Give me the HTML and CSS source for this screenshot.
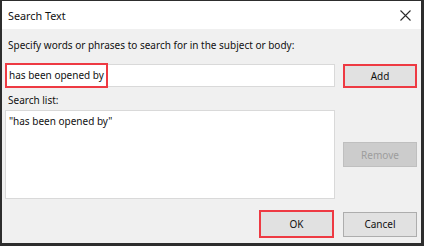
FILE: index.html
```html
<!DOCTYPE html>
<html lang="en">
<head>
    <meta charset="UTF-8">
    <title>Search Text</title>
    <link rel="stylesheet" href="styles.css">
</head>
<body>
    <div class="dialog">
        <div class="title-bar">
            <span class="title">Search Text</span>
            <svg class="close" width="11" height="11" viewBox="0 0 11 11">
                <path d="M0.5 0.5 L10.5 10.5 M10.5 0.5 L0.5 10.5" stroke="#2b2b2b" stroke-width="1.1" fill="none"/>
            </svg>
        </div>

        <div class="content">
            <div class="label">Specify words or phrases to search for in the subject or body:</div>

            <div class="row input-row">
                <div class="input-box">
                    <span class="highlight">has been opened by</span>
                </div>
                <button class="btn marked add">Add</button>
            </div>

            <div class="label list-label">Search list:</div>

            <div class="row">
                <div class="list-box">"has been opened by"</div>
                <div class="side">
                    <button class="btn disabled">Remove</button>
                </div>
            </div>

            <div class="footer">
                <button class="btn marked ok">OK</button>
                <button class="btn">Cancel</button>
            </div>
        </div>
    </div>
</body>
</html>
```

FILE: styles.css
```css
* {
    box-sizing: border-box;
}

body {
    margin: 0;
    padding: 1px 0 0 2px;
    font-family: "Noto Sans", "Open Sans", sans-serif;
    font-size: 10px;
    color: #111;
    background-color: #2d2d2d;
}

.dialog {
    width: 419px;
    height: 242px;
    background-color: #f0f0f0;
    display: flex;
    flex-direction: column;
}

.title-bar {
    height: 28px;
    flex-shrink: 0;
    background-color: #fff;
    display: flex;
    align-items: center;
    justify-content: space-between;
    padding: 0 10px 0 6px;
}

.title {
    font-size: 10.8px;
    color: #111;
}

.close {
    margin-top: 1px;
}

.content {
    padding: 8px 4px 0 3px;
    display: flex;
    flex-direction: column;
}

.label {
    height: 16px;
    line-height: 16px;
    padding-left: 3px;
}

.row {
    display: flex;
    align-items: flex-start;
    gap: 8px;
}

.input-row {
    margin-top: 10px;
}

.input-box {
    width: 330px;
    height: 23px;
    margin-top: 1px;
    background-color: #fff;
    border: 1px solid #d9d9d9;
    display: flex;
    align-items: center;
}

.highlight {
    height: 25px;
    line-height: 21px;
    padding: 0 2px;
    margin-left: -1px;
    border: 2px solid #ee3a43;
}

.list-label {
    margin-top: 4px;
    margin-bottom: 2px;
}

.list-box {
    width: 330px;
    height: 89px;
    background-color: #fff;
    border: 1px solid #d9d9d9;
    padding: 3px 0 0 3px;
}

.side {
    padding-top: 32px;
}

.btn {
    width: 74px;
    height: 25px;
    font-family: inherit;
    font-size: 10px;
    color: #111;
    background-color: #e1e1e1;
    border: 1px solid #adadad;
    padding: 0;
}

.marked {
    border: 2px solid #ee3a43;
}

.add {
    height: 24px;
    margin-top: 1px;
}

.disabled {
    background-color: #cccccc;
    border-color: #bfbfbf;
    color: #9d9d9d;
}

.footer {
    display: flex;
    justify-content: flex-end;
    align-items: center;
    gap: 9px;
    margin-top: 11px;
}

.ok {
    width: 75px;
    height: 28px;
}
```
